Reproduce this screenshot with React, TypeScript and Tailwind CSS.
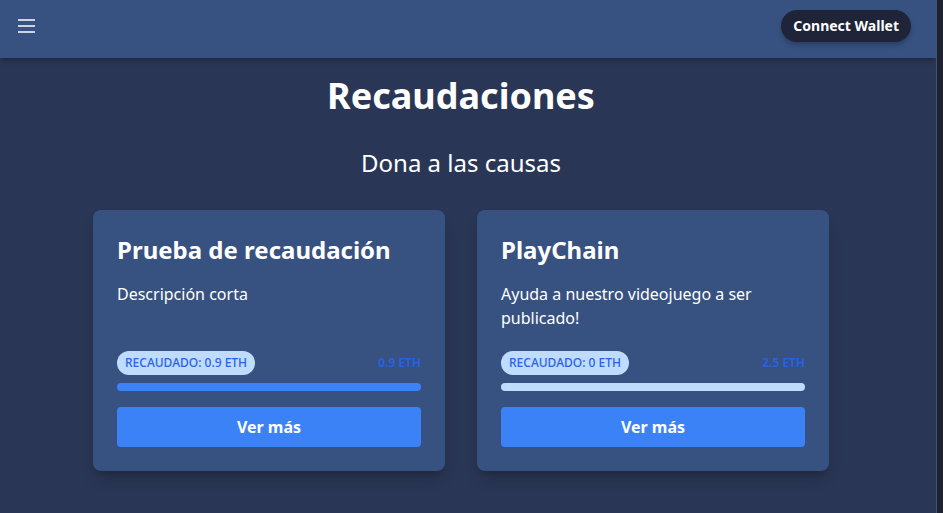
const causes = [
  {
    title: "Prueba de recaudación",
    description: "Descripción corta",
    raised: 0.9,
    goal: 0.9,
  },
  {
    title: "PlayChain",
    description: "Ayuda a nuestro videojuego a ser publicado!",
    raised: 0,
    goal: 2.5,
  },
];

function CauseCard({ title, description, raised, goal }: (typeof causes)[number]) {
  const pct = goal > 0 ? Math.min(100, (raised / goal) * 100) : 0;
  return (
    <div className="flex flex-col rounded-lg bg-[#375280] p-6 shadow-lg shadow-black/20">
      <h2 className="text-2xl font-bold text-white">{title}</h2>
      <p className="mt-4 min-h-12 text-base text-white">{description}</p>
      <div className="mt-[21px] mb-2 flex items-center justify-between">
        <span className="inline-block rounded-full bg-[#bfdbfe] px-2 py-1 text-xs font-medium uppercase text-[#2563eb]">
          Recaudado: {raised} ETH
        </span>
        <span className="text-xs font-semibold text-[#2563eb]">{goal} ETH</span>
      </div>
      <div className="mb-4 flex h-2 overflow-hidden rounded bg-[#bfdbfe]">
        <div className="bg-[#3b82f6]" style={{ width: `${pct}%` }} />
      </div>
      <button className="h-10 rounded bg-[#3b82f6] font-bold text-white">Ver más</button>
    </div>
  );
}

export default function App() {
  return (
    <div
      className="flex min-h-[513px] bg-[#2a3655]"
      style={{ fontFamily: '"Segoe UI", "Noto Sans", sans-serif' }}
    >
      <div className="flex-1">
        <header className="flex h-[58px] items-center justify-between bg-[#375280] pb-[6px] pl-[18px] pr-[25px] shadow-md shadow-black/20">
          <svg width="17" height="14" viewBox="0 0 17 14" className="text-white">
            <path d="M0 1h17M0 7h17M0 13h17" stroke="currentColor" strokeWidth="1.5" />
          </svg>
          <button className="h-8 rounded-full bg-[#1f2438] px-3 text-sm font-bold text-white shadow-md shadow-black/20">
            Connect Wallet
          </button>
        </header>
        <main className="pr-[14px] pt-[18px] pb-10">
          <h1 className="text-center text-4xl font-bold text-white">Recaudaciones</h1>
          <p className="mt-[31px] text-center text-2xl text-white">Dona a las causas</p>
          <div className="mx-auto mt-[31px] grid w-[736px] grid-cols-2 gap-8">
            {causes.map((c) => (
              <CauseCard key={c.title} {...c} />
            ))}
          </div>
        </main>
      </div>
      <div className="w-[7px] border-l border-[#46526c] bg-[#1f2230]" />
    </div>
  );
}
